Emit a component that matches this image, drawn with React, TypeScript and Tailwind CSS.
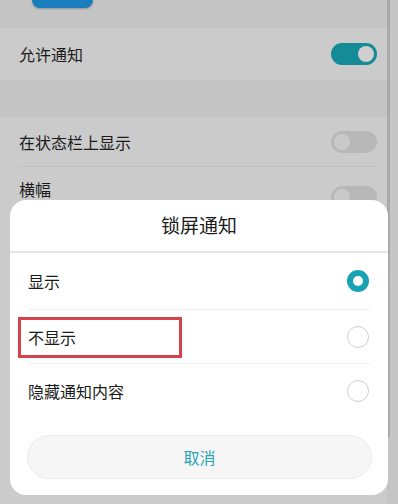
export default function App() {
  const options = [
    { label: "显示", selected: true, h: "h-[57px]" },
    { label: "不显示", selected: false, h: "h-[54px]" },
    { label: "隐藏通知内容", selected: false, h: "h-[54px]" },
  ];

  return (
    <div className="relative w-[398px] h-[504px] overflow-hidden bg-[#c4c4c4] font-['Noto_Sans_CJK_SC',sans-serif] text-[#1c1c1c]">
      <div className="flex h-full">
        {/* settings page behind the dialog */}
        <div className="w-[387px] flex flex-col">
          <div className="h-[28px] pl-[32px]">
            <div className="w-[61px] h-[8px] rounded-b-[8px] bg-[#1a7dbd] shadow-[0_1px_2px_rgba(0,0,0,0.25)]" />
          </div>

          <div className="h-[52px] bg-[#cbcbcb] flex items-center justify-between pl-[19px] pr-[10px]">
            <span className="text-[16px]">允许通知</span>
            <div className="w-[46px] h-[22px] rounded-full bg-[#148b96] flex items-center justify-end pr-[3px]">
              <div className="w-[16px] h-[16px] rounded-full bg-[#cfcfcf]" />
            </div>
          </div>

          <div className="h-[37px]" />

          <div className="flex-1 bg-[#cbcbcb]">
            <div className="h-[49px] flex items-center justify-between pl-[19px] pr-[10px]">
              <span className="text-[16px]">在状态栏上显示</span>
              <div className="w-[46px] h-[22px] rounded-full bg-[#b8b8b8] flex items-center pl-[3px]">
                <div className="w-[16px] h-[16px] rounded-full bg-[#c9c9c9]" />
              </div>
            </div>
            <div className="mx-[19px] mr-[10px] h-px bg-[#c2c2c2]" />
            <div className="h-[49px] flex items-start justify-between pl-[19px] pr-[10px] pt-[10px]">
              <span className="text-[16px]">横幅</span>
              <div className="w-[46px] h-[22px] rounded-full bg-[#b8b8b8] flex items-center pl-[3px] mt-[9px]">
                <div className="w-[16px] h-[16px] rounded-full bg-[#c9c9c9]" />
              </div>
            </div>
          </div>
        </div>
        <div className="w-[3px] h-[437px] bg-[#a9a9a9]" />
        <div className="flex-1 bg-[#c6c6c6]" />
      </div>

      {/* lock-screen notification dialog */}
      <div className="absolute left-[10px] top-[200px] w-[378px] h-[295px] rounded-[16px] bg-white flex flex-col">
        <div className="h-[53px] flex items-center justify-center border-b-2 border-[#e6e6e6] text-[19px] text-[#1a1a1a]">
          锁屏通知
        </div>
        {options.map((o, i) => (
          <div key={o.label} className={`${o.h} mx-[18px] flex items-center justify-between ${i < 2 ? "border-b border-[#f0f0f0]" : ""}`}>
            <span className="text-[16px] text-[#1a1a1a]">{o.label}</span>
            {o.selected ? (
              <div className="w-[22px] h-[22px] rounded-full border-[6px] border-[#18a3b4] mr-[1px]" />
            ) : (
              <div className="w-[22px] h-[22px] rounded-full border border-[#cfcfcf] mr-[1px]" />
            )}
          </div>
        ))}
        <div className="mt-[17px] ml-[17px] mr-[16px] h-[44px] rounded-full bg-[#f6f6f6] border border-[#ebebeb] flex items-center justify-center text-[16px] text-[#2aa5b6]">
          取消
        </div>

        <div className="absolute left-[8px] top-[117px] w-[164px] h-[41px] border-[3px] border-[#d6434a]" />
      </div>
    </div>
  );
}
